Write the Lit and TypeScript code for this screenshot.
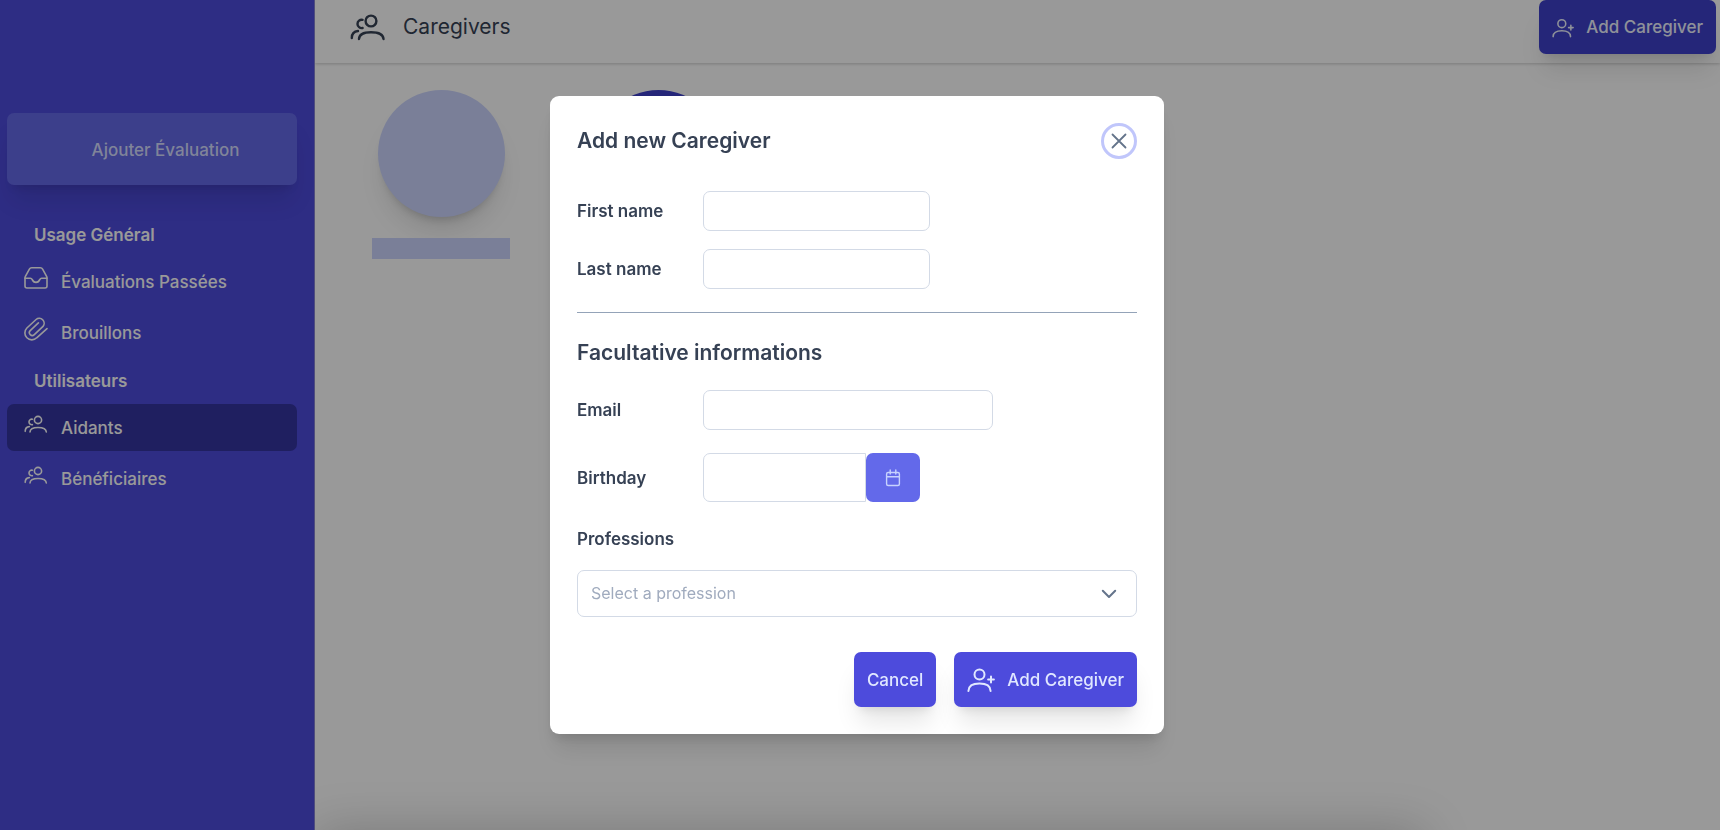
import { LitElement, html, css } from "lit";
import { customElement, state } from "lit/decorators.js";
import { classMap } from "lit/directives/class-map.js";

const groupIcon = () => html`<svg class="icon group" viewBox="0 0 36 36" aria-hidden="true">
  <circle cx="21" cy="12" r="5.4"></circle>
  <path d="M12.6 10.8a4.2 4.2 0 1 0 0 8.200"></path>
  <path d="M9 30c.2-4.700 4-6.800 12-6.800s12.200 2.100 12.500 6.800"></path>
  <path d="M1.800 29c0-4 2-6.600 6.200-7"></path>
</svg>`;

const inboxIcon = () => html`<svg class="icon" viewBox="0 0 24 24" aria-hidden="true">
  <path d="M1 12.2h5.4c.9 0 1.3.4 1.7 1.2.8 2 2 3 3.900 3s3.100-1 3.900-3c.4-.8.8-1.200 1.700-1.200H23"></path>
  <path d="M1 12.200v7.800c0 1.300.7 2 2 2h18c1.300 0 2-.7 2-2v-7.800c0-.7-.1-1.200-.4-1.800l-4-7.300c-.5-.9-1.200-1.300-2.200-1.300H7.600c-1 0-1.700.4-2.200 1.300l-4 7.300c-.3.6-.4 1.100-.4 1.800z"></path>
</svg>`;

const clipIcon = () => html`<svg class="icon" viewBox="0 0 24 24" aria-hidden="true">
  <path d="M23 11.600 12.700 20.800a6.900 6.900 0 0 1-9.800-9.800l9.200-8.500a4.900 4.900 0 0 1 6.900 6.900l-8.700 8.300a2.900 2.900 0 0 1-4.100-4.100l8.200-7.700"></path>
</svg>`;

const userPlusIcon = () => html`<svg class="icon" viewBox="0 0 28 28" aria-hidden="true">
  <circle cx="12.500" cy="8.500" r="5"></circle>
  <path d="M1.400 25c.2-5 4.200-7.400 11.100-7.400s10.900 2.400 11.100 7.400"></path>
  <path d="M24 10.600v5.800M21.100 13.500h5.800"></path>
</svg>`;

const calendarIcon = () => html`<svg class="icon" viewBox="0 0 18 18" aria-hidden="true">
  <rect x="2.600" y="3.500" width="12.800" height="13" rx="1.500"></rect>
  <path d="M2.600 7.800h12.800M6.200 1v4M11.800 1v4"></path>
</svg>`;

const closeIcon = () => html`<svg class="icon" viewBox="0 0 18 18" aria-hidden="true">
  <path d="M2.500 2.500l13 13M15.500 2.500l-13 13"></path>
</svg>`;

const chevronIcon = () => html`<svg class="icon chevron" viewBox="0 0 18 18" aria-hidden="true">
  <path d="M2.800 5.800 9 12l6.200-6.200"></path>
</svg>`;

interface NavItem {
  label: string;
  icon: () => unknown;
  active?: boolean;
}

const sections: { title: string; items: NavItem[] }[] = [
  {
    title: "Usage Général",
    items: [
      { label: "Évaluations Passées", icon: inboxIcon },
      { label: "Brouillons", icon: clipIcon },
    ],
  },
  {
    title: "Utilisateurs",
    items: [
      { label: "Aidants", icon: groupIcon, active: true },
      { label: "Bénéficiaires", icon: groupIcon },
    ],
  },
];

const shared = css`
  :host {
    --brand: #4d4bdc;
    --ink: #364154;
    font-family: Inter, "Liberation Sans", sans-serif;
    font-size: 16px;
    line-height: 27px;
    color: var(--ink);
  }
  * {
    box-sizing: border-box;
  }
  h1,
  h2,
  h3,
  ul {
    margin: 0;
    padding: 0;
  }
  button,
  input,
  select {
    font: inherit;
    margin: 0;
  }
  .icon {
    display: block;
    flex: none;
    fill: none;
    stroke: currentColor;
    stroke-linecap: round;
    stroke-linejoin: round;
    stroke-width: 2;
  }
  .group {
    stroke-width: 2.4;
  }
  .btn {
    display: flex;
    align-items: center;
    justify-content: center;
    gap: 12px;
    height: 54px;
    padding: 1px 13px 0;
    border: 0;
    border-radius: 7px;
    background: var(--brand);
    color: #e0e7ff;
    font-size: 17px;
    font-weight: 500;
    white-space: nowrap;
    box-shadow:
      0 20px 25px -5px rgb(0 0 0 / 0.1),
      0 8px 10px -6px rgb(0 0 0 / 0.1);
    cursor: pointer;
  }
`;

@customElement("side-nav")
export class SideNav extends LitElement {
  static styles = [
    shared,
    css`
      :host {
        display: block;
        padding: 113px 17px 24px 7px;
        border-right: 1px solid #8583d0;
        background: var(--brand);
        color: #ffffff;
      }
      .create {
        width: 100%;
        height: 72px;
        background: #6569e8;
        color: #d5dcff;
        padding-top: 2px;
        padding-left: 40px;
      }
      .nav {
        padding-top: 25px;
      }
      .title {
        padding: 12px 27px 9px;
        font-size: 17px;
        font-weight: 600;
        line-height: 27px;
      }
      .list {
        display: grid;
        gap: 4px;
        list-style: none;
      }
      .link {
        display: flex;
        align-items: center;
        gap: 13px;
        height: 47px;
        padding: 1px 17px 0;
        border-radius: 7px;
        color: inherit;
        font-size: 17px;
        font-weight: 500;
        text-decoration: none;
      }
      .active {
        background: #3435a0;
      }
      .link .icon {
        width: 24px;
        height: 24px;
        margin-bottom: 8px;
      }
      .link .icon:not(.group) {
        stroke-width: 1.6;
      }
    `,
  ];

  render() {
    return html`
      <button class="btn create" type="button">Ajouter Évaluation</button>
      <nav class="nav">
        ${sections.map(
          (section) => html`
            <h2 class="title">${section.title}</h2>
            <ul class="list">
              ${section.items.map(
                (item) => html`<li>
                  <a href="#" class=${classMap({ link: true, active: !!item.active })}>${item.icon()}${item.label}</a>
                </li>`,
              )}
            </ul>
          `,
        )}
      </nav>
    `;
  }
}

@customElement("caregiver-dialog")
export class CaregiverDialog extends LitElement {
  static styles = [
    shared,
    css`
      :host {
        display: block;
        width: 100%;
        max-width: 614px;
      }
      .panel {
        padding: 27px;
        border-radius: 9px;
        background: #ffffff;
        box-shadow:
          0 20px 25px -5px rgb(0 0 0 / 0.1),
          0 8px 12px -4px rgb(0 0 0 / 0.12);
      }
      .head {
        display: flex;
        align-items: center;
        justify-content: space-between;
        height: 36px;
        margin-bottom: 32px;
      }
      .heading {
        font-size: 21px;
        font-weight: 600;
        line-height: 32px;
      }
      .close {
        display: grid;
        place-items: center;
        width: 36px;
        height: 36px;
        padding: 0;
        border: 3px solid #c0c6fb;
        border-radius: 50%;
        background: #ffffff;
        color: #64748b;
      }
      .close .icon {
        width: 18px;
        height: 18px;
        stroke-width: 1.8;
      }
      .field {
        display: grid;
        grid-template-columns: 126px 1fr;
        align-items: center;
      }
      .label {
        padding-top: 1px;
        font-size: 17px;
        font-weight: 600;
      }
      .names {
        display: grid;
        gap: 18px;
      }
      .rule {
        height: 1px;
        margin: 23px 0 24px;
        border: 0;
        background: #94a3b8;
      }
      .extra {
        display: grid;
        gap: 23px;
        margin-top: 21px;
      }
      .input {
        width: 100%;
        max-width: 227px;
        height: 40px;
        padding: 0 14px;
        border: 1px solid #d3dae6;
        border-radius: 7px;
        background: #ffffff;
        color: inherit;
      }
      .wide {
        max-width: 290px;
      }
      .date {
        display: flex;
      }
      .date .input {
        max-width: 163px;
        height: 49px;
        border-radius: 7px 0 0 7px;
      }
      .pick {
        display: grid;
        place-items: center;
        width: 54px;
        height: 49px;
        padding: 0;
        border: 0;
        border-radius: 7px;
        background: #6369ea;
        color: #c7d2fe;
      }
      .pick .icon {
        width: 18px;
        height: 18px;
        stroke-width: 1.4;
      }
      .jobs {
        display: grid;
        gap: 17px;
      }
      .picker {
        display: grid;
        align-items: center;
      }
      .picker > * {
        grid-area: 1 / 1;
      }
      .select {
        appearance: none;
        width: 100%;
        height: 47px;
        padding: 0 13px;
        border: 1px solid #d3dae6;
        border-radius: 7px;
        background: #ffffff;
        color: #a0abbe;
      }
      .chevron {
        justify-self: end;
        width: 18px;
        height: 18px;
        margin-right: 19px;
        color: #64748b;
        pointer-events: none;
      }
      .actions {
        display: flex;
        justify-content: flex-end;
        gap: 18px;
        margin-top: 35px;
      }
      .actions .btn {
        height: 55px;
      }
      .actions .icon {
        width: 28px;
        height: 28px;
      }
    `,
  ];

  render() {
    return html`
      <form class="panel" role="dialog" aria-labelledby="title" @submit=${(e: Event) => e.preventDefault()}>
        <div class="head">
          <h2 class="heading" id="title">Add new Caregiver</h2>
          <button class="close" type="button" aria-label="Close" @click=${this.close}>${closeIcon()}</button>
        </div>
        <div class="names">
          <div class="field">
            <label class="label" for="first">First name</label>
            <input class="input" id="first" type="text" />
          </div>
          <div class="field">
            <label class="label" for="last">Last name</label>
            <input class="input" id="last" type="text" />
          </div>
        </div>
        <hr class="rule" />
        <h3 class="heading">Facultative informations</h3>
        <div class="extra">
          <div class="field">
            <label class="label" for="email">Email</label>
            <input class="input wide" id="email" type="email" />
          </div>
          <div class="field">
            <label class="label" for="birthday">Birthday</label>
            <div class="date">
              <input class="input" id="birthday" type="text" />
              <button class="pick" type="button" aria-label="Choose date">${calendarIcon()}</button>
            </div>
          </div>
          <div class="jobs">
            <label class="label" for="job">Professions</label>
            <div class="picker">
              <select class="select" id="job">
                <option value="">Select a profession</option>
              </select>
              ${chevronIcon()}
            </div>
          </div>
        </div>
        <div class="actions">
          <button class="btn" type="button" @click=${this.close}>Cancel</button>
          <button class="btn" type="submit">${userPlusIcon()}Add Caregiver</button>
        </div>
      </form>
    `;
  }

  private close() {
    this.dispatchEvent(new CustomEvent("close"));
  }
}

@customElement("app-root")
export class AppRoot extends LitElement {
  static styles = [
    shared,
    css`
      :host {
        display: block;
      }
      .shell {
        display: grid;
        grid-template-columns: 315px minmax(0, 1fr);
        min-height: 100vh;
        background: #ffffff;
      }
      .main {
        position: relative;
        overflow: hidden;
      }
      .bar {
        display: flex;
        align-items: flex-start;
        justify-content: space-between;
        height: 63px;
        padding: 0 4px 0 35px;
        box-shadow: 0 1px 3px rgb(0 0 0 / 0.2);
      }
      .brand {
        display: flex;
        align-items: center;
        gap: 17px;
        height: 54px;
      }
      .brand .icon {
        width: 36px;
        height: 36px;
      }
      .name {
        font-size: 21px;
        font-weight: 400;
        line-height: 32px;
      }
      .bar .btn {
        background: #3e40ca;
        color: #eef2ff;
      }
      .bar .btn .icon {
        width: 22px;
        height: 22px;
      }
      .people {
        display: flex;
        flex-wrap: wrap;
        gap: 79px;
        padding: 27px 57px;
      }
      .person {
        display: grid;
        justify-items: center;
        gap: 21px;
        width: 138px;
      }
      .avatar {
        width: 127px;
        height: 127px;
        border-radius: 50%;
        background: #cbd4fd;
        box-shadow:
          0 20px 25px -5px rgb(0 0 0 / 0.1),
          0 8px 10px -6px rgb(0 0 0 / 0.2);
      }
      .solid {
        background: #3e40ca;
      }
      .caption {
        width: 100%;
        height: 21px;
        background: #cbd4fd;
      }
      .sheet {
        position: absolute;
        top: 100%;
        left: 0;
        width: 79%;
        height: 100px;
        box-shadow: 0 0 50px rgb(0 0 0 / 0.2);
      }
      .overlay {
        position: fixed;
        inset: 0;
        display: grid;
        place-items: center;
        padding-right: 6px;
        background: rgb(0 0 0 / 0.4);
      }
    `,
  ];

  @state() private open = true;

  render() {
    return html`
      <div class="shell">
        <side-nav></side-nav>
        <main class="main">
          <header class="bar">
            <div class="brand">
              ${groupIcon()}
              <h1 class="name">Caregivers</h1>
            </div>
            <button class="btn" type="button" @click=${() => (this.open = true)}>${userPlusIcon()}Add Caregiver</button>
          </header>
          <section class="people">
            <div class="person">
              <div class="avatar"></div>
              <div class="caption"></div>
            </div>
            <div class="person">
              <div class="avatar solid"></div>
              <div class="caption"></div>
            </div>
          </section>
          <div class="sheet"></div>
        </main>
      </div>
      ${this.open
        ? html`<div class="overlay">
            <caregiver-dialog @close=${() => (this.open = false)}></caregiver-dialog>
          </div>`
        : null}
    `;
  }
}
